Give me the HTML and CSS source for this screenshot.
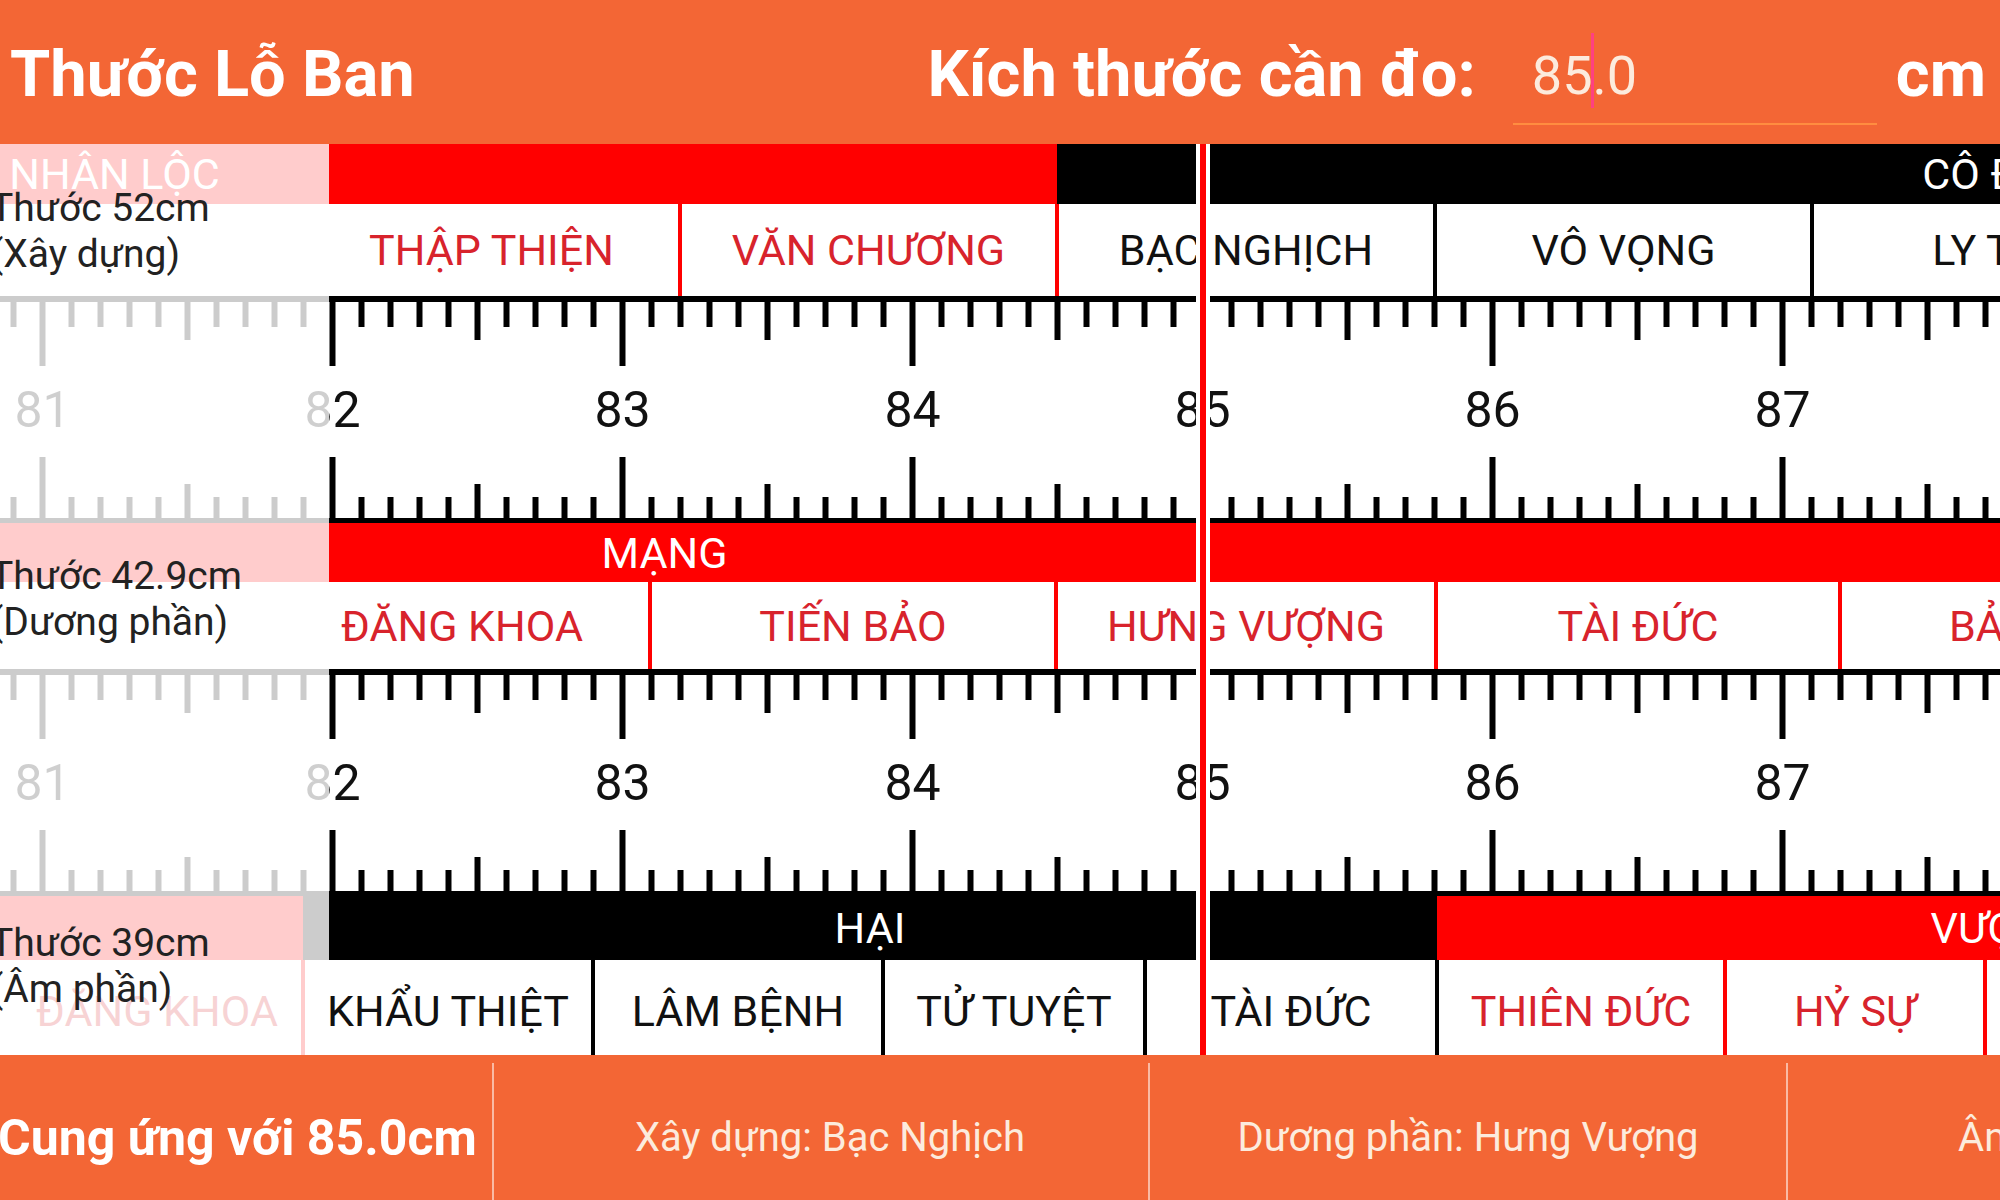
FILE: index.html
```html
<!DOCTYPE html>
<html lang="vi">
<head>
<meta charset="utf-8">
<title>Thước Lỗ Ban</title>
<link rel="stylesheet" href="styles.css">
</head>
<body>
<header class="topbar">
  <div class="title">Thước Lỗ Ban</div>
  <div class="ask">Kích thước cần đo:</div>
  <div class="field">85<span class="caret"></span>.0</div>
  <div class="unit">cm</div>
</header>

<main class="board">
  <div class="track bar r1">
    <span class="b-red" style="width:1885px;margin-left:-828px">NHÂN LỘC</span>
    <span class="b-black" style="width:1885px">CÔ ĐỘC</span>
  </div>
  <div class="track cells r1">
    <span class="blank" style="width:305px"></span>
    <span class="c-red" style="width:377px">THẬP THIỆN</span>
    <span class="c-red" style="width:377px">VĂN CHƯƠNG</span>
    <span class="c-black" style="width:378px">BẠC NGHỊCH</span>
    <span class="c-black" style="width:377px">VÔ VỌNG</span>
    <span class="c-black" style="width:377px">LY TÁN</span>
  </div>

  <svg class="ruler" width="2000" height="227" viewBox="0 0 2000 227">
    <defs>
      <pattern id="ticks" x="329.5" y="0" width="290" height="227" patternUnits="userSpaceOnUse">
        <rect x="0" y="0" width="6" height="70"/>
        <rect x="29" y="0" width="6" height="31"/>
        <rect x="58" y="0" width="6" height="31"/>
        <rect x="87" y="0" width="6" height="31"/>
        <rect x="116" y="0" width="6" height="31"/>
        <rect x="145" y="0" width="6" height="44"/>
        <rect x="174" y="0" width="6" height="31"/>
        <rect x="203" y="0" width="6" height="31"/>
        <rect x="232" y="0" width="6" height="31"/>
        <rect x="261" y="0" width="6" height="31"/>
        <rect x="0" y="161" width="6" height="66"/>
        <rect x="29" y="201" width="6" height="26"/>
        <rect x="58" y="201" width="6" height="26"/>
        <rect x="87" y="201" width="6" height="26"/>
        <rect x="116" y="201" width="6" height="26"/>
        <rect x="145" y="188" width="6" height="39"/>
        <rect x="174" y="201" width="6" height="26"/>
        <rect x="203" y="201" width="6" height="26"/>
        <rect x="232" y="201" width="6" height="26"/>
        <rect x="261" y="201" width="6" height="26"/>
      </pattern>
    </defs>
    <rect x="0" y="0" width="2000" height="6"/>
    <rect x="0" y="222" width="2000" height="5"/>
    <rect x="0" y="0" width="2000" height="227" fill="url(#ticks)"/>
    <text class="num" x="42.5" y="131">81</text>
    <text class="num" x="332.5" y="131">82</text>
    <text class="num" x="622.5" y="131">83</text>
    <text class="num" x="912.5" y="131">84</text>
    <text class="num" x="1202.5" y="131">85</text>
    <text class="num" x="1492.5" y="131">86</text>
    <text class="num" x="1782.5" y="131">87</text>
  </svg>

  <div class="track bar r2">
    <span class="b-red" style="width:1557px;margin-left:-114px">MẠNG</span>
    <span class="b-red" style="width:1557px">TÀI</span>
  </div>
  <div class="track cells r2">
    <span class="blank" style="width:276px"></span>
    <span class="c-red" style="width:376px">ĐĂNG KHOA</span>
    <span class="c-red" style="width:406px">TIẾN BẢO</span>
    <span class="c-red" style="width:380px">HƯNG VƯỢNG</span>
    <span class="c-red" style="width:404px">TÀI ĐỨC</span>
    <span class="c-red" style="width:400px">BẢO KHỐ</span>
  </div>

  <svg class="ruler" width="2000" height="227" viewBox="0 0 2000 227">
    <rect x="0" y="0" width="2000" height="6"/>
    <rect x="0" y="222" width="2000" height="5"/>
    <rect x="0" y="0" width="2000" height="227" fill="url(#ticks)"/>
    <text class="num" x="42.5" y="131">81</text>
    <text class="num" x="332.5" y="131">82</text>
    <text class="num" x="622.5" y="131">83</text>
    <text class="num" x="912.5" y="131">84</text>
    <text class="num" x="1202.5" y="131">85</text>
    <text class="num" x="1492.5" y="131">86</text>
    <text class="num" x="1782.5" y="131">87</text>
  </svg>

  <div class="track bar r3">
    <span class="b-red" style="width:303px"></span>
    <span class="b-black" style="width:1134px">HẠI</span>
    <span class="b-red" style="width:1134px">VƯỢNG</span>
  </div>
  <div class="track cells r3">
    <span class="blank" style="width:13px"></span>
    <span class="c-red" style="width:292px">ĐĂNG KHOA</span>
    <span class="c-black" style="width:290px">KHẨU THIỆT</span>
    <span class="c-black" style="width:290px">LÂM BỆNH</span>
    <span class="c-black" style="width:262px">TỬ TUYỆT</span>
    <span class="c-black" style="width:292px">TÀI ĐỨC</span>
    <span class="c-red" style="width:288px">THIÊN ĐỨC</span>
    <span class="c-red" style="width:260px">HỶ SỰ</span>
    <span class="c-red" style="width:290px">TIẾN BẢO</span>
  </div>

  <div class="fade">
    <div class="tag t1">Thước 52cm<br>(Xây dựng)</div>
    <div class="tag t2">Thước 42.9cm<br>(Dương phần)</div>
    <div class="tag t3">Thước 39cm<br>(Âm phần)</div>
  </div>
  <div class="cursor"></div>
</main>

<footer class="foot">
  <div class="f-main">Cung ứng với 85.0cm</div>
  <div class="sep"></div>
  <div class="f-item w1 shift">Xây dựng: Bạc Nghịch</div>
  <div class="sep"></div>
  <div class="f-item w2">Dương phần: Hưng Vượng</div>
  <div class="sep"></div>
  <div class="f-item w1">Âm phần: Tài Đức</div>
</footer>
</body>
</html>
```

FILE: styles.css
```css
* { box-sizing: border-box; }

body {
  margin: 0;
  width: 2000px;
  height: 1200px;
  overflow: hidden;
  background: #fff;
  font-family: Roboto, "Noto Sans", "Liberation Sans", sans-serif;
}

/* ---------- header ---------- */
.topbar {
  height: 144px;
  background: #f36635;
  color: #fff;
  display: flex;
  align-items: flex-start;
  padding: 42px 14px 0 10px;
  white-space: nowrap;
}
.title {
  flex: 1;
  font-weight: 700;
  font-size: 65px;
  line-height: 1;
}
.ask {
  font-weight: 700;
  font-size: 65px;
  line-height: 1;
}
.field {
  width: 364px;
  height: 76px;
  margin-left: 37px;
  margin-top: 7px;
  padding-left: 19px;
  border-bottom: 2px solid #ff8d40;
  font-size: 54px;
  line-height: 54px;
  color: #fcebdd;
}
.caret {
  display: inline-block;
  width: 3px;
  height: 75px;
  margin: 0 -1.5px;
  vertical-align: top;
  position: relative;
  top: -16px;
  background: #ff4081;
}
.unit {
  margin-left: 19px;
  font-weight: 700;
  font-size: 65px;
  line-height: 1;
}

/* ---------- ruler board ---------- */
.board {
  position: relative;
  height: 911px;
  overflow: hidden;
}
.track {
  display: flex;
  width: 2000px;
  overflow: hidden;
  white-space: nowrap;
}
.track > span {
  flex: none;
  display: flex;
  align-items: center;
  justify-content: center;
}
.bar {
  font-size: 43px;
  color: #fff;
}
.bar.r1 { height: 60px; }
.bar.r2 { height: 59px; }
.bar.r3 { height: 64px; }
.b-red { background: #ff0000; }
.b-black { background: #000; }

.cells { font-size: 43px; }
.cells.r1 { height: 92px; }
.cells.r2 { height: 87px; }
.cells.r3 { height: 95px; }
.cells.r3 > span { padding-top: 7px; }
.c-red {
  color: #d8232c;
  border-right: 4px solid #f00;
}
.c-black {
  color: #111;
  border-right: 4px solid #000;
}

.ruler {
  display: block;
  fill: #000;
}
.num {
  font-family: Roboto, "Noto Sans", sans-serif;
  font-size: 50px;
  fill: #111;
  text-anchor: middle;
}

/* faded area left of the start mark */
.fade {
  position: absolute;
  left: 0;
  top: 0;
  width: 329px;
  height: 911px;
  background: rgba(255, 255, 255, 0.8);
}
.tag {
  position: absolute;
  left: -10px;
  font-size: 39px;
  line-height: 46px;
  color: #222;
  white-space: nowrap;
}
.t1 { top: 41px; }
.t2 { top: 409px; }
.t3 { top: 776px; }

.cursor {
  position: absolute;
  top: 0;
  left: 1196px;
  width: 14px;
  height: 911px;
  background: #f00;
  border-left: 4px solid #fff;
  border-right: 4px solid #fff;
}

/* ---------- footer ---------- */
.foot {
  height: 145px;
  background: #f36635;
  color: #fff;
  display: flex;
  align-items: center;
  padding-top: 20px;
  white-space: nowrap;
}
.f-main {
  flex: none;
  width: 494px;
  margin-left: -2px;
  font-weight: 700;
  font-size: 50px;
  line-height: 1;
}
.sep {
  flex: none;
  align-self: stretch;
  width: 2px;
  margin-top: -12px;
  background: rgba(255, 255, 255, 0.55);
}
.f-item {
  flex: none;
  text-align: center;
  font-size: 40px;
  line-height: 1;
  color: #fcebdd;
}
.w1 { width: 654px; }
.w2 { width: 636px; }
.shift { padding-left: 18px; }
```
